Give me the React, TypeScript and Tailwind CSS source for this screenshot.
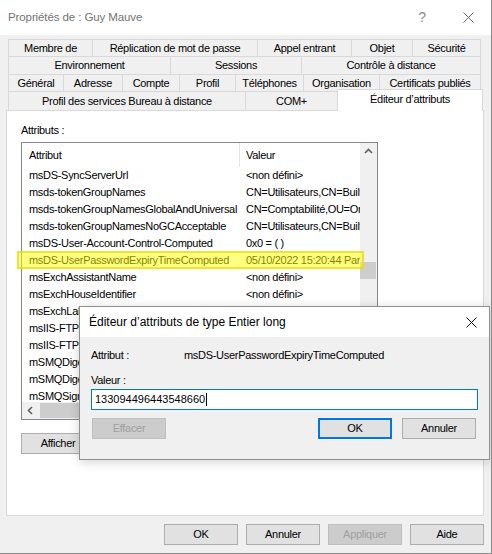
import React from "react";

type Tab = { label: string; w: string };

const tabRows: { h: string; tabs: Tab[] }[] = [
  {
    h: "h-[17px]",
    tabs: [
      { label: "Membre de", w: "w-[84px]" },
      { label: "Réplication de mot de passe", w: "w-[165px]" },
      { label: "Appel entrant", w: "w-[94px]" },
      { label: "Objet", w: "w-[61px]" },
      { label: "Sécurité", w: "w-[69px]" },
    ],
  },
  {
    h: "h-[18px]",
    tabs: [
      { label: "Environnement", w: "w-[162px]" },
      { label: "Sessions", w: "w-[131px]" },
      { label: "Contrôle à distance", w: "w-[180px]" },
    ],
  },
  {
    h: "h-[17px]",
    tabs: [
      { label: "Général", w: "w-[55px]" },
      { label: "Adresse", w: "w-[59px]" },
      { label: "Compte", w: "w-[57px]" },
      { label: "Profil", w: "w-[56px]" },
      { label: "Téléphones", w: "w-[68px]" },
      { label: "Organisation", w: "w-[76px]" },
      { label: "Certificats publiés", w: "w-[102px]" },
    ],
  },
];

const attributes: [string, string][] = [
  ["msDS-SyncServerUrl", "<non défini>"],
  ["msds-tokenGroupNames", "CN=Utilisateurs,CN=Builtin,DC=lab,DC=local"],
  ["msds-tokenGroupNamesGlobalAndUniversal", "CN=Comptabilité,OU=Organisation,DC=lab,DC=local"],
  ["msds-tokenGroupNamesNoGCAcceptable", "CN=Utilisateurs,CN=Builtin,DC=lab,DC=local"],
  ["msDS-User-Account-Control-Computed", "0x0 = ( )"],
  ["msDS-UserPasswordExpiryTimeComputed", "05/10/2022 15:20:44 Paris, Madrid (heure d’été)"],
  ["msExchAssistantName", "<non défini>"],
  ["msExchHouseIdentifier", "<non défini>"],
  ["msExchLabeledURI", "<non défini>"],
  ["msIIS-FTPDir", "<non défini>"],
  ["msIIS-FTPRoot", "<non défini>"],
  ["mSMQDigests", "<non défini>"],
  ["mSMQDigestsMig", "<non défini>"],
  ["mSMQSignCertificates", "<non défini>"],
  ["mSMQSignCertificatesMig", "<non défini>"],
];

function CloseIcon({ color }: { color: string }) {
  return (
    <svg width="11" height="11" viewBox="0 0 11 11">
      <path d="M0.5 0.5 L10.5 10.5 M10.5 0.5 L0.5 10.5" stroke={color} strokeWidth="1" fill="none" />
    </svg>
  );
}

function Chevron({ dir }: { dir: "up" | "left" }) {
  return (
    <svg width="9" height="9" viewBox="0 0 9 9">
      {dir === "up" ? (
        <path d="M1 6 L4.5 2.5 L8 6" stroke="#606060" strokeWidth="1.6" fill="none" />
      ) : (
        <path d="M6 1 L2.5 4.5 L6 8" stroke="#606060" strokeWidth="1.6" fill="none" />
      )}
    </svg>
  );
}

function Button({
  children,
  disabled,
  primary,
  className = "",
}: {
  children: React.ReactNode;
  disabled?: boolean;
  primary?: boolean;
  className?: string;
}) {
  const look = disabled
    ? "bg-[#cccccc] border border-[#bfbfbf] text-[#a0a0a0]"
    : primary
    ? "bg-[#e1e1e1] border-2 border-[#0078d7] text-black"
    : "bg-[#e1e1e1] border border-[#adadad] text-black";
  return (
    <div className={`flex h-[21px] w-[74px] items-center justify-center ${look} ${className}`}>
      {children}
    </div>
  );
}

export default function App() {
  return (
    <div className="relative h-[554px] w-[492px] overflow-hidden border-r border-b border-[#8a8a8a] bg-[#f0f0f0] font-['Liberation_Sans',Arial,sans-serif] text-[11px] leading-[15px] tracking-[-0.3px] text-black">
      {/* title bar */}
      <div className="flex h-[35px] items-center bg-white">
        <div className="flex-1 pl-[8px] text-[11.5px] tracking-[-0.1px] text-[#737373]">
          Propriétés de : Guy Mauve
        </div>
        <div className="flex w-[46px] justify-center text-[14px] text-[#8c8c8c]">?</div>
        <div className="flex w-[46px] justify-center">
          <CloseIcon color="#6a6a6a" />
        </div>
      </div>

      {/* tabs */}
      <div className="pl-[8px] pt-[4px]">
        {tabRows.map((row, i) => (
          <div key={i} className={`flex ${row.h}`}>
            {row.tabs.map((t, j) => (
              <div
                key={t.label}
                className={`flex items-center justify-center border-t border-l border-[#d9d9d9] ${t.w} ${
                  j === row.tabs.length - 1 ? "border-r" : ""
                }`}
              >
                {t.label}
              </div>
            ))}
          </div>
        ))}
        <div className="relative z-10 flex h-[19px] items-end">
          <div className="flex h-full w-[237px] items-center justify-center border-t border-l border-[#d9d9d9]">
            Profil des services Bureau à distance
          </div>
          <div className="flex h-full w-[92px] items-center justify-center border-t border-l border-[#d9d9d9]">
            COM+
          </div>
          <div className="-mb-px flex h-[22px] w-[146px] items-start justify-center border-t border-r border-l border-[#d9d9d9] bg-white pt-[2px]">
            Éditeur d’attributs
          </div>
        </div>
      </div>

      {/* tab panel */}
      <div className="ml-[6px] h-[406px] w-[478px] border border-[#d9d9d9] bg-white pt-[12px] pl-[14px]">
        <div>Attributs :</div>
        <div className="mt-[4px] flex h-[278px] w-[357px] border border-[#828790]">
          <div className="flex w-[338px] flex-col">
            <div className="flex-1 overflow-hidden">
              <div className="flex h-[24px] items-stretch">
                <div className="flex w-[218px] items-center border-r border-[#e5e5e5] pl-[7px]">Attribut</div>
                <div className="flex items-center pl-[6px]">Valeur</div>
              </div>
              {attributes.map(([name, value]) => (
                <div key={name} className="flex h-[17px] items-center whitespace-nowrap">
                  <div className="w-[218px] shrink-0 overflow-hidden pl-[7px]">{name}</div>
                  <div className="flex-1 overflow-hidden pl-[6px]">{value}</div>
                </div>
              ))}
            </div>
            <div className="flex h-[17px] items-stretch bg-[#f0f0f0]">
              <div className="flex w-[17px] items-center justify-center">
                <Chevron dir="left" />
              </div>
              <div className="my-px ml-px w-[220px] bg-[#cdcdcd]" />
            </div>
          </div>
          <div className="flex w-[17px] flex-col bg-[#f0f0f0]">
            <div className="flex h-[17px] items-center justify-center">
              <Chevron dir="up" />
            </div>
            <div className="mt-[102px] h-[17px] w-[16px] bg-[#cdcdcd]" />
          </div>
        </div>
        <div className="mt-[13px] flex w-[357px] justify-between">
          <Button>Afficher</Button>
          <Button>Filtrer</Button>
        </div>
      </div>

      {/* bottom buttons */}
      <div className="mt-[8px] flex justify-end gap-[8px] pr-[7px]">
        <Button className="w-[73px]">OK</Button>
        <Button className="w-[73px]">Annuler</Button>
        <Button className="w-[73px]" disabled>
          Appliquer
        </Button>
        <Button className="w-[73px]">Aide</Button>
      </div>

      {/* highlight marker over the selected attribute row */}
      <div className="absolute top-[251px] left-[17px] h-[18px] w-[347px] border-2 border-[#e8d000]/60 bg-[#ffff00]/50" />

      {/* child dialog */}
      <div className="absolute top-[306px] left-[79px] z-20 flex h-[154px] w-[411px] flex-col border border-[#8f8f8f] bg-[#f0f0f0] shadow-[0_2px_10px_rgba(0,0,0,0.18)]">
        <div className="flex h-[30px] items-center bg-white pr-[12px] pl-[9px]">
          <div className="flex-1 text-[12px] tracking-normal">Éditeur d’attributs de type Entier long</div>
          <CloseIcon color="#111111" />
        </div>
        <div className="pt-[10px] pl-[11px]">
          <div className="flex h-[16px] items-center">
            <div className="w-[93px]">Attribut :</div>
            <div>msDS-UserPasswordExpiryTimeComputed</div>
          </div>
          <div className="mt-[9px] flex h-[16px] items-center">Valeur :</div>
          <div className="mt-px flex h-[21px] w-[387px] items-center border border-[#0078d7] bg-white pl-[3px]">
            <span className="tracking-[0px]">133094496443548660</span>
            <span className="ml-px h-[13px] w-px bg-black" />
          </div>
          <div className="mt-[8px] flex w-[387px]">
            <Button disabled className="ml-px">
              Effacer
            </Button>
            <div className="flex-1" />
            <Button primary>OK</Button>
            <Button className="mr-[2px] ml-[10px]">Annuler</Button>
          </div>
        </div>
      </div>
    </div>
  );
}
